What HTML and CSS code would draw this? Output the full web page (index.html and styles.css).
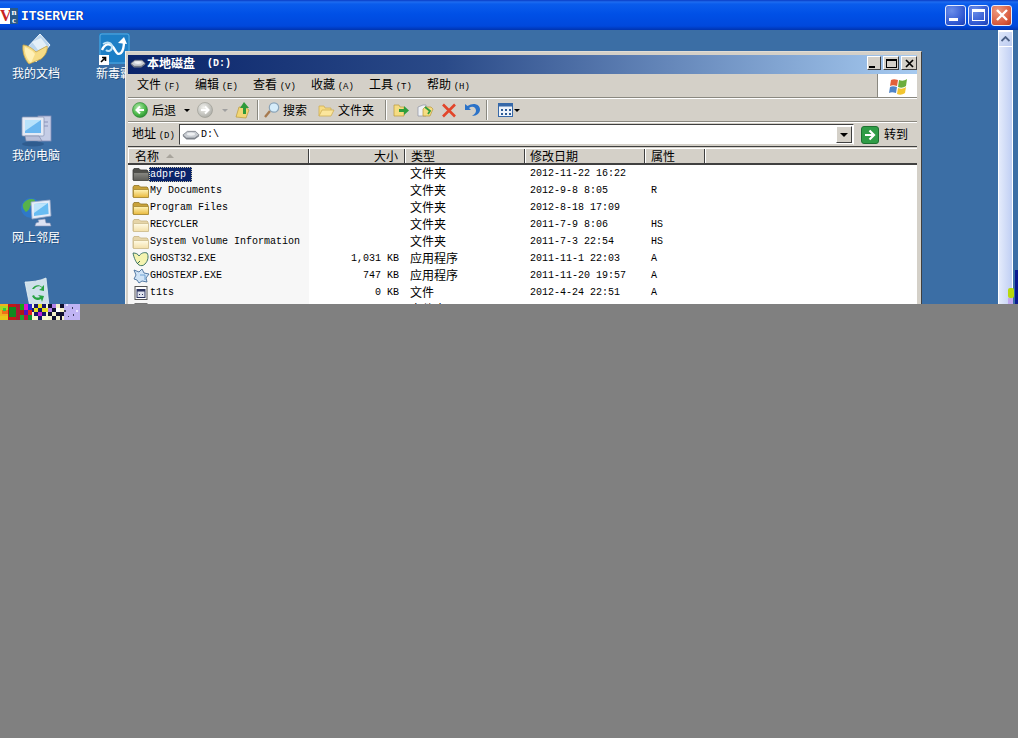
FILE: index.html
```html
<!DOCTYPE html>
<html lang="zh-CN">
<head>
<meta charset="utf-8">
<title>ITSERVER</title>
<link rel="stylesheet" href="styles.css">
</head>
<body>
<svg class="defs" width="0" height="0" aria-hidden="true">
  <defs>
    <linearGradient id="fg" x1="0" y1="0" x2="0" y2="1"><stop offset="0" stop-color="#fff4b8"/><stop offset="1" stop-color="#e8b83c"/></linearGradient>
    <linearGradient id="fgp" x1="0" y1="0" x2="0" y2="1"><stop offset="0" stop-color="#fffbe6"/><stop offset="1" stop-color="#f3dfa8"/></linearGradient>
    <linearGradient id="fgs" x1="0" y1="0" x2="0" y2="1"><stop offset="0" stop-color="#8a8a84"/><stop offset="1" stop-color="#5c5c58"/></linearGradient>
    <radialGradient id="gb" cx=".4" cy=".35" r=".75"><stop offset="0" stop-color="#b6ecb0"/><stop offset=".6" stop-color="#4cb84a"/><stop offset="1" stop-color="#1f7d2a"/></radialGradient>
    <radialGradient id="gy" cx=".4" cy=".35" r=".75"><stop offset="0" stop-color="#f2f2ee"/><stop offset="1" stop-color="#a5a59f"/></radialGradient>
    <symbol id="folder" viewBox="0 0 18 16"><path d="M1 14V4l1-1.500h5L8.500 4H15l1 1v9z" fill="#c9a23a" stroke="#8f7426" stroke-width=".8"/><path d="M1.500 14.500V6.500h15v8z" fill="url(#fg)" stroke="#a3852e" stroke-width=".8"/></symbol>
    <symbol id="folder-pale" viewBox="0 0 18 16"><path d="M1 14V4l1-1.500h5L8.500 4H15l1 1v9z" fill="#e6d5a8" stroke="#c6b382" stroke-width=".8"/><path d="M1.500 14.500V6.500h15v8z" fill="url(#fgp)" stroke="#cdbb8c" stroke-width=".8"/></symbol>
    <symbol id="folder-sel" viewBox="0 0 18 16"><path d="M1 14V4l1-1.500h5L8.500 4H15l1 1v9z" fill="#4e4e4a" stroke="#3a3a38" stroke-width=".8"/><path d="M1.500 14.500V6.500h15v8z" fill="url(#fgs)" stroke="#484844" stroke-width=".8"/></symbol>
    <symbol id="drive" viewBox="0 0 20 12"><path d="M1 6.500 6 2.500h9l4 4-5 3.500H5z" fill="#c8ccd2" stroke="#6d727a" stroke-width=".8"/><path d="M1 6.500 5 10h9l5-3.500v1.500L14 11.500H5L1 8z" fill="#7e838b"/><ellipse cx="10" cy="5.500" rx="4.500" ry="1.800" fill="#eef0f2"/></symbol>
  </defs>
</svg>

<div class="session">
  <header class="vnc-bar">
    <div class="vnc-logo"><span class="vnc-v">V</span><span class="vnc-nc">n<br>c</span></div>
    <span class="vnc-name">ITSERVER</span>
    <div class="vnc-btns">
      <span class="xp-btn xp-min"><i></i></span>
      <span class="xp-btn xp-max"><i></i></span>
      <span class="xp-btn xp-close"><svg width="14" height="14" viewBox="0 0 14 14"><path d="M2 2l10 10M12 2 2 12" stroke="#fff" stroke-width="2.400"/></svg></span>
    </div>
  </header>

  <main class="desktop">
    <div class="icon-column">
      <div class="desk-icon">
        <svg width="36" height="34" viewBox="0 0 36 34"><path d="M7 18 22 2l10 11-14 17z" fill="#bcd6ee" stroke="#eef5fb"/><path d="M14 10l9-4 6 8-9 4z" fill="#fff" opacity=".6"/><path d="M5 13c4 0 9 3 13 7l11-6c1 4-1 9-6 13l-12 5C7 28 4 20 5 13z" fill="#f6dc86" stroke="#c9a445" stroke-width=".8"/><path d="M7 15c3 1 7 3 10 7l-4 9c-3-3-7-9-6-16z" fill="#fff0b6"/></svg>
        <span class="desk-label">我的文档</span>
      </div>
      <div class="desk-icon">
        <svg width="36" height="34" viewBox="0 0 36 34"><rect x="20" y="2" width="13" height="25" fill="#c5cde6" stroke="#8690b8" stroke-width=".8"/><path d="M23 8h7M23 12h7" stroke="#8a93bb"/><rect x="4" y="3" width="22" height="19" rx="1" fill="#e4eaf5" stroke="#8c97b5" stroke-width=".8"/><rect x="7" y="6" width="16" height="13" fill="#6bb7f0"/><path d="M7 6h16L7 17z" fill="#b8e2fb"/><path d="M7 22h14l3 5H8z" fill="#b8bfd9" stroke="#7b84a5" stroke-width=".6"/><ellipse cx="15" cy="30" rx="11" ry="2.500" fill="#2f5c8f"/></svg>
        <span class="desk-label">我的电脑</span>
      </div>
      <div class="desk-icon">
        <svg width="36" height="34" viewBox="0 0 36 34"><circle cx="13" cy="12" r="10" fill="#2f78c8"/><path d="M5 8c3-5 9-6 12-4 0 3-3 5-5 6 0 3-2 5-4 6-2-2-4-5-3-8z" fill="#57b24a"/><path d="M13 6l19-2 1 16-19 3z" fill="#e4ecf8" stroke="#94a4c4" stroke-width=".8"/><path d="M16 8l14-1 .6 11L16 20z" fill="#68bcf2"/><path d="M16 8l14-1-14 10z" fill="#bde4fb"/><path d="M20 24l7-1 1 4h4l1 3H17l1-3 3-1z" fill="#dde2f2" stroke="#8f98b8" stroke-width=".6"/></svg>
        <span class="desk-label">网上邻居</span>
      </div>
      <div class="desk-icon">
        <svg class="bin" width="36" height="34" viewBox="0 0 36 34"><path d="M7 7c6 0 15-1 21-4l3 28c-5 3-13 3-19 1z" fill="#cfe0ea" stroke="#e8f2f6" stroke-width=".8"/><path d="M16 14c2-3 6-4 8-1l-3 2 5 1v-6l-2 2c-3-3-8-2-10 2z" fill="#27a341"/><path d="M14 21c2 4 6 5 9 3l1 3 2-6-6-1 2 2c-2 1-5 1-6-2z" fill="#27a341"/></svg>
      </div>
    </div>

    <div class="shortcut">
      <svg width="31" height="31" viewBox="0 0 31 31"><rect width="31" height="31" rx="2" fill="#1d7fc6"/><rect x="1" y="1" width="29" height="29" rx="2" fill="none" stroke="#69b5e6" stroke-width=".8"/><path d="M3 17c3-7 8-7 11-3s4 9 8 6c2-2 3-7 3-12" fill="none" stroke="#fff" stroke-width="2.400"/><path d="M19 10l6-6 3 7z" fill="#fff"/><path d="M4 11c5-3 9-1 9 3s-4 5-6 3" fill="none" stroke="#bfe3f7" stroke-width="2"/></svg>
      <span class="shortcut-arrow"><svg width="9" height="9" viewBox="0 0 9 9"><path d="M2 7l4-4M3 2.500h3.500V6" fill="none" stroke="#000" stroke-width="1.600"/></svg></span>
      <span class="shortcut-label">新毒霸</span>
    </div>

    <section class="window">
      <div class="win-title">
        <svg class="win-title-icon" width="16" height="10"><use href="#drive"/></svg>
        <span class="win-title-text">本地磁盘</span><span class="win-title-path">(D:)</span>
        <div class="win-btns">
          <span class="cl-btn cl-narrow"><i class="g-min"></i></span>
          <span class="cl-btn"><i class="g-max"></i></span>
          <span class="cl-btn"><svg width="9" height="9" viewBox="0 0 9 9"><path d="M1 1l7 7M8 1 1 8" stroke="#000" stroke-width="1.700"/></svg></span>
        </div>
      </div>

      <nav class="menu">
        <span class="menu-item">文件 <b>(F)</b></span>
        <span class="menu-item">编辑 <b>(E)</b></span>
        <span class="menu-item">查看 <b>(V)</b></span>
        <span class="menu-item">收藏 <b>(A)</b></span>
        <span class="menu-item">工具 <b>(T)</b></span>
        <span class="menu-item">帮助 <b>(H)</b></span>
        <div class="menu-logo">
          <svg width="20" height="20" viewBox="0 0 20 20"><path d="M2 4c2-1 4-1 7 0l-1 6c-3-1-5-1-7 0z" fill="#e2603a"/><path d="M10 4c3 1 5 1 8-1l-1 7c-3 2-5 2-8 1z" fill="#6cad3c"/><path d="M1 11c2-1 4-1 7 0l-1 6c-3-1-5-1-7 0z" fill="#4f84c8"/><path d="M9 12c3 1 5 1 8-1l-1 6c-3 2-5 2-8 1z" fill="#f2c530"/></svg>
        </div>
      </nav>

      <div class="toolbar">
        <span class="tb-btn tb-back">
          <svg width="16" height="16" viewBox="0 0 16 16"><circle cx="8" cy="8" r="7.500" fill="url(#gb)" stroke="#2c8433" stroke-width=".6"/><path d="M12 8H5M8 4.500 4.500 8 8 11.500" fill="none" stroke="#fff" stroke-width="2"/></svg>
          <span class="tb-text">后退</span><i class="caret"></i>
        </span>
        <span class="tb-btn tb-forward">
          <svg width="16" height="16" viewBox="0 0 16 16"><circle cx="8" cy="8" r="7.500" fill="url(#gy)" stroke="#97978f" stroke-width=".6"/><path d="M4 8h7M8 4.500 11.500 8 8 11.500" fill="none" stroke="#fff" stroke-width="2"/></svg>
          <i class="caret caret-off"></i>
        </span>
        <span class="tb-btn tb-up">
          <svg width="16" height="18" viewBox="0 0 16 18"><path d="M1 16 4 6h6l4 3-3 8z" fill="#f2d674" stroke="#b99a3b" stroke-width=".7"/><path d="M9 1l5 6h-3v6H8V7H5z" fill="#2d9a3a"/></svg>
        </span>
        <i class="tb-sep"></i>
        <span class="tb-btn tb-search">
          <svg width="18" height="18" viewBox="0 0 18 18"><path d="M7 10 2 16" stroke="#a6794f" stroke-width="2.400"/><circle cx="11" cy="6.500" r="4.700" fill="#d5ecfa" stroke="#8aa3b8" stroke-width="1.200"/></svg>
          <span class="tb-text">搜索</span>
        </span>
        <span class="tb-btn tb-folders">
          <svg width="17" height="15" viewBox="0 0 17 15"><path d="M1 13V3h5l1 2h6v2" fill="#f7dc85" stroke="#cfae54" stroke-width=".8"/><path d="M1 13l3-6h12l-3 6z" fill="#fbe69d" stroke="#cfae54" stroke-width=".8"/></svg>
          <span class="tb-text">文件夹</span>
        </span>
        <i class="tb-sep tb-sep-tight"></i>
        <span class="tb-btn tb-small">
          <svg width="17" height="16" viewBox="0 0 17 16"><path d="M1 14V3h5l1 2h4v9z" fill="#f5dc82" stroke="#b99a3b" stroke-width=".7"/><path d="M6 7h5V4l5 4.500L11 13v-3H6z" fill="#2e9e3c"/></svg>
        </span>
        <span class="tb-btn tb-small">
          <svg width="17" height="16" viewBox="0 0 17 16"><path d="M1 14V5l5-2h3v11z" fill="#f0f2f5" stroke="#8e94a3" stroke-width=".7"/><path d="M6 14V7l2-2h6l2 2-3 7z" fill="#f5dc82" stroke="#b99a3b" stroke-width=".7"/><path d="M8 5l5 4-2 3" fill="none" stroke="#2e9e3c" stroke-width="1.800"/></svg>
        </span>
        <span class="tb-btn tb-small">
          <svg width="16" height="15" viewBox="0 0 16 15"><path d="M2 1.500l12 12M14 1.500l-12 12" stroke="#e2452a" stroke-width="2.600"/></svg>
        </span>
        <span class="tb-btn tb-small">
          <svg width="17" height="15" viewBox="0 0 17 15"><path d="M1 1v6h6L5 5c3-2.500 7-1 7 2.500 0 2-1 3.500-4 5.500 5 0 8-3 8-6.500C16 1 9-1 3.500 3z" fill="#2b72c8"/></svg>
        </span>
        <i class="tb-sep"></i>
        <span class="tb-btn tb-views">
          <svg width="15" height="14" viewBox="0 0 15 14"><rect x=".5" y=".5" width="14" height="13" fill="#eef3fa" stroke="#3768a8"/><rect x=".5" y=".5" width="14" height="3" fill="#3768a8"/><path d="M3 6h2v2H3zM7 6h2v2H7zM11 6h2v2h-2zM3 10h2v2H3zM7 10h2v2H7zM11 10h2v2h-2z" fill="#2f5c96"/></svg>
          <i class="caret"></i>
        </span>
      </div>

      <div class="address">
        <span class="addr-label">地址 <b>(D)</b></span>
        <div class="addr-input">
          <svg width="18" height="11"><use href="#drive"/></svg>
          <span class="mono">D:\</span>
          <span class="addr-drop"><i></i></span>
        </div>
        <span class="go">
          <svg width="18" height="18" viewBox="0 0 18 18"><rect x=".5" y=".5" width="17" height="17" rx="2.500" fill="#2f9c46" stroke="#1d7130"/><path d="M4 9h8M8.500 4.500 13 9l-4.500 4.500" fill="none" stroke="#fff" stroke-width="2.200"/></svg>
          <span class="tb-text go-text">转到</span>
        </span>
      </div>

      <div class="list-head">
        <span class="hd hd-name">名称<i class="sort"></i></span>
        <span class="hd hd-right">大小</span>
        <span class="hd hd-type">类型</span>
        <span class="hd">修改日期</span>
        <span class="hd hd-attr">属性</span>
        <span class="hd hd-rest"></span>
      </div>

      <div class="list">
        <div class="row">
          <span class="c-name"><svg class="f-icon" width="18" height="16"><use href="#folder-sel"/></svg><span class="name name-sel">adprep</span></span>
          <span class="c-size"></span><span class="c-type">文件夹</span><span class="c-date">2012-11-22 16:22</span><span class="c-attr"></span>
        </div>
        <div class="row">
          <span class="c-name"><svg class="f-icon" width="18" height="16"><use href="#folder"/></svg><span class="name">My Documents</span></span>
          <span class="c-size"></span><span class="c-type">文件夹</span><span class="c-date">2012-9-8 8:05</span><span class="c-attr">R</span>
        </div>
        <div class="row">
          <span class="c-name"><svg class="f-icon" width="18" height="16"><use href="#folder"/></svg><span class="name">Program Files</span></span>
          <span class="c-size"></span><span class="c-type">文件夹</span><span class="c-date">2012-8-18 17:09</span><span class="c-attr"></span>
        </div>
        <div class="row">
          <span class="c-name"><svg class="f-icon" width="18" height="16"><use href="#folder-pale"/></svg><span class="name">RECYCLER</span></span>
          <span class="c-size"></span><span class="c-type">文件夹</span><span class="c-date">2011-7-9 8:06</span><span class="c-attr">HS</span>
        </div>
        <div class="row">
          <span class="c-name"><svg class="f-icon" width="18" height="16"><use href="#folder-pale"/></svg><span class="name">System Volume Information</span></span>
          <span class="c-size"></span><span class="c-type">文件夹</span><span class="c-date">2011-7-3 22:54</span><span class="c-attr">HS</span>
        </div>
        <div class="row">
          <span class="c-name"><svg class="f-icon" width="18" height="16" viewBox="0 0 18 16"><path d="M1 2c3 0 5 1 6 3 2-3 5-4 8-3 2 3 1 8-2 11-2 2-4 2-6 1C4 12 2 7 1 2z" fill="#f4f3b0" stroke="#2f6a5c" stroke-width=".9"/><path d="M5 13l3-3" stroke="#2f6a5c"/></svg><span class="name">GHOST32.EXE</span></span>
          <span class="c-size">1,031 KB</span><span class="c-type">应用程序</span><span class="c-date">2011-11-1 22:03</span><span class="c-attr">A</span>
        </div>
        <div class="row">
          <span class="c-name"><svg class="f-icon" width="18" height="16" viewBox="0 0 18 16"><path d="M2 2l5 2 3-3 2 4 5 1-3 4 1 4-5-1-3 2-2-3-3-1 2-4z" fill="#cfe3f6" stroke="#476f9c" stroke-width=".9"/><path d="M8 7h5v5" fill="none" stroke="#6fa2d2"/></svg><span class="name">GHOSTEXP.EXE</span></span>
          <span class="c-size">747 KB</span><span class="c-type">应用程序</span><span class="c-date">2011-11-20 19:57</span><span class="c-attr">A</span>
        </div>
        <div class="row">
          <span class="c-name"><svg class="f-icon" width="18" height="16" viewBox="0 0 18 16"><rect x="3" y="1.500" width="12" height="13" fill="#fff" stroke="#555"/><rect x="5" y="4.500" width="8" height="8" fill="#dfe3ee" stroke="#2c3560"/><rect x="5" y="4.500" width="8" height="2" fill="#2c3560"/><path d="M7 9h1v1H7zM10 9h1v1h-1z" fill="#2c3560"/></svg><span class="name">t1ts</span></span>
          <span class="c-size">0 KB</span><span class="c-type">文件</span><span class="c-date">2012-4-24 22:51</span><span class="c-attr">A</span>
        </div>
        <div class="row">
          <span class="c-name"><svg class="f-icon" width="18" height="16" viewBox="0 0 18 16"><rect x="3" y="1.500" width="12" height="13" fill="#fff" stroke="#777"/></svg><span class="name"></span></span>
          <span class="c-size"></span><span class="c-type">文件夹</span><span class="c-date"></span><span class="c-attr"></span>
        </div>
      </div>
    </section>

    <aside class="scrollbar">
      <span class="sb-up"><svg width="9" height="6" viewBox="0 0 9 6"><path d="M.5 5 4.500 1l4 4" fill="none" stroke="#4d6185" stroke-width="1.800"/></svg></span>
      <span class="sb-track"></span>
    </aside>
    <i class="glitch-dot"></i>
    <i class="glitch-lilac"></i>
    <i class="glitch-navy"></i>
  </main>
</div>

<svg class="noise" width="80" height="16" viewBox="0 0 80 16" shape-rendering="crispEdges" aria-hidden="true">
  <rect width="80" height="16" fill="#fff"/>
  <rect width="8" height="16" fill="#f0b020"/><rect y="2" width="8" height="4" fill="#a8d820"/><rect x="2" y="6" width="6" height="4" fill="#f07018"/><rect x="3" y="4" width="3" height="3" fill="#38c838"/><rect y="12" width="8" height="4" fill="#e8c818"/>
  <rect x="8" width="8" height="16" fill="#c01818"/><rect x="9" y="3" width="7" height="10" fill="#108820"/>
  <rect x="16" width="4" height="16" fill="#a81830"/><rect x="20" width="4" height="6" fill="#18a018"/><rect x="20" y="6" width="4" height="5" fill="#b01818"/><rect x="20" y="11" width="4" height="5" fill="#20a030"/>
  <rect x="24" width="4" height="6" fill="#e010d0"/><rect x="24" y="6" width="4" height="5" fill="#5010c0"/><rect x="24" y="11" width="4" height="5" fill="#c01040"/><rect x="28" width="4" height="6" fill="#2828d0"/><rect x="28" y="6" width="4" height="5" fill="#e02020"/><rect x="28" y="11" width="4" height="5" fill="#109030"/>
  <rect x="32" width="16" height="16" fill="#f8f8d0"/><path d="M34 0h4v4h-4zM42 0h4v4h-4zM32 4h2v4h-2zM38 4h4v4h-4zM34 8h4v4h-4zM42 8h4v4h-4zM38 12h4v4h-4z" fill="#181868"/><path d="M38 0h4v4h-4zM34 4h4v4h-4zM42 4h6v4h-6z" fill="#e8e020"/><path d="M38 8h4v4h-4z" fill="#c020d0"/>
  <rect x="48" width="16" height="16" fill="#f4f0c8"/><path d="M48 0h4v4h-4zM52 4h4v4h-4zM60 0h4v4h-4zM56 8h4v4h-4zM48 8h4v4h-4zM60 8h4v4h-4zM52 12h4v4h-4zM60 12h2v4h-2z" fill="#101030"/><path d="M52 0h4v4h-4zM48 4h4v4h-4z" fill="#b080e8"/><path d="M56 4h4v4h-4z" fill="#ffffff"/>
  <rect x="64" width="16" height="16" fill="#c0b4f4"/><path d="M72 3h1v2h-1zM73 10h1v2h-1zM64 6h2v2h-2zM68 12h1v1h-1z" fill="#404060"/><path d="M66 0h2v2h-2zM76 6h2v2h-2z" fill="#e8e4ff"/>
</svg>
</body>
</html>
```

FILE: styles.css
```css
* { box-sizing: border-box; }
html, body { margin: 0; padding: 0; }
body {
  width: 1018px;
  height: 738px;
  overflow: hidden;
  background: #808080;
  font-family: "Noto Sans CJK SC", "Liberation Sans", sans-serif;
  font-size: 12px;
  color: #000;
}
i { display: block; font-style: normal; }
b { font-weight: normal; font-family: "Liberation Mono", monospace; font-size: 9px; }
.defs { position: absolute; }
.mono { font-family: "Liberation Mono", monospace; font-size: 10px; }

.session { width: 1018px; height: 304px; overflow: hidden; display: flex; flex-direction: column; }
.noise { display: block; }

/* Outer viewer title bar */
.vnc-bar {
  flex: none;
  height: 30px;
  display: flex;
  align-items: center;
  padding-top: 2px;
  background: linear-gradient(#0a3cc4 0, #1e6cf0 2px, #0a5cec 4px, #0050e6 14px, #0048dc 26px, #0034b0 30px);
}
.vnc-logo {
  width: 18px; height: 16px;
  display: flex;
  background: #fff;
  font-family: "Liberation Serif", serif;
  font-weight: bold;
  line-height: 8px;
}
.vnc-v { width: 10px; height: 16px; background: #fff; color: #c8231f; font-size: 16px; line-height: 16px; }
.vnc-nc { width: 8px; height: 16px; background: #2a5a88; color: #fff; font-size: 9px; text-align: center; }
.vnc-name {
  margin-left: 3px;
  font-family: "Liberation Mono", monospace;
  font-weight: bold;
  font-size: 13px;
  color: #fff;
  text-shadow: 1px 0 0 #0a2c90;
}
.vnc-btns { margin-left: auto; margin-right: 6px; display: flex; gap: 2px; margin-top: -2px; }
.xp-btn {
  width: 21px; height: 21px;
  display: flex; align-items: center; justify-content: center;
  border: 1px solid #e4ecff;
  border-radius: 3px;
  background: radial-gradient(circle at 30% 25%, #6b8eea, #2d55cf 70%, #1e3fb0);
}
.xp-min i { width: 9px; height: 3px; background: #fff; margin: 9px 5px 0 0; }
.xp-max i { width: 13px; height: 12px; border: 1px solid #fff; border-top-width: 3px; }
.xp-close { background: radial-gradient(circle at 30% 25%, #ed9a80, #d8583a 70%, #b23a20); }

/* Desktop */
.desktop {
  position: relative;
  flex: 1;
  background: #3b6ea5;
  overflow: hidden;
}
.icon-column {
  display: flex;
  flex-direction: column;
  gap: 18px;
  width: 72px;
  padding-top: 2px;
}
.desk-icon { height: 64px; display: flex; flex-direction: column; align-items: center; }
.desk-label { color: #fff; line-height: 16px; margin-top: -1px; text-shadow: 1px 1px 0 #24507f; }
.bin { margin-top: -3px; }
.shortcut { position: absolute; left: 99px; top: 3px; width: 31px; }
.shortcut svg { display: block; }
.shortcut-arrow {
  position: absolute; left: 0; top: 22px;
  width: 10px; height: 10px;
  background: #fff;
}
.shortcut-label {
  position: absolute; left: -3px; top: 32px;
  white-space: nowrap;
  color: #fff;
  line-height: 16px;
  text-shadow: 1px 1px 0 #24507f;
}

/* Explorer window */
.window {
  position: absolute;
  left: 125px; top: 21px;
  width: 797px;
  height: 400px;
  padding: 3px 4px 3px 2px;
  background: #d4d0c8;
  border-top: 1px solid #dfdcd6;
  border-left: 1px solid #f4f3f0;
  border-right: 1px solid #404040;
  border-bottom: 1px solid #404040;
}
.win-title {
  height: 19px;
  display: flex;
  align-items: center;
  padding: 0 0 3px 2px;
  background: linear-gradient(90deg, #0a246a 0, #2a4a88 40%, #a6caf0 100%);
  color: #fff;
  font-weight: bold;
}
.win-title-icon { flex: none; }
.win-title-text { margin-left: 1px; line-height: 16px; }
.win-title-path { margin-left: 12px; font-family: "Liberation Mono", monospace; font-size: 10px; }
.win-btns { margin-left: auto; display: flex; align-items: center; }
.cl-btn {
  width: 16px; height: 14px;
  margin-left: 2px;
  display: flex; align-items: center; justify-content: center;
  background: #d4d0c8;
  border-top: 1px solid #fff; border-left: 1px solid #fff;
  border-right: 1px solid #404040; border-bottom: 1px solid #404040;
}
.cl-narrow { width: 14px; }
.g-min { width: 6px; height: 2px; background: #000; margin: 7px 4px 0 0; }
.g-max { width: 11px; height: 9px; border: 1px solid #000; border-top-width: 2px; }

.menu {
  height: 24px;
  display: flex;
  align-items: center;
  padding-left: 9px;
  gap: 11px;
  border-bottom: 1px solid #8a8880;
}
.menu-item { white-space: nowrap; line-height: 16px; width: 47px; }
.menu-logo {
  margin-left: auto;
  width: 40px; height: 23px;
  display: flex; align-items: center; justify-content: center;
  padding-left: 2px;
  background: #fff;
  border-left: 1px solid #8a8880;
}
.toolbar {
  height: 24px;
  display: flex;
  align-items: center;
  padding-left: 4px;
  border-top: 1px solid #fff;
  border-bottom: 1px solid #8a8880;
}
.tb-btn { display: flex; align-items: center; gap: 4px; white-space: nowrap; }
.tb-back { width: 65px; }
.tb-back .tb-text { width: 28px; }
.tb-forward { width: 38px; gap: 9px; }
.tb-up { width: 20px; }
.tb-search { width: 52px; gap: 2px; }
.tb-folders { width: 65px; gap: 3px; margin-left: 3px; }
.tb-small { width: 23.500px; justify-content: center; }
.tb-views { margin-left: 6px; gap: 1px; }
.tb-text { line-height: 16px; }
.caret { width: 0; height: 0; border: 3px solid transparent; border-top: 3px solid #000; border-bottom: 0; }
.caret-off { border-top-color: #a0a0a0; }
.tb-sep { width: 2px; height: 20px; margin: 0 4px 0 2px; border-left: 1px solid #8a8880; border-right: 1px solid #fff; }
.tb-sep-tight { margin-right: 3px; }

.address {
  height: 25px;
  display: flex;
  align-items: center;
  padding-left: 4px;
  border-top: 1px solid #fff;
  border-bottom: 1px solid #404040;
}
.addr-label { width: 47px; flex: none; white-space: nowrap; line-height: 16px; }
.addr-input {
  flex: none;
  width: 675px;
  height: 21px;
  display: flex;
  align-items: center;
  gap: 1px;
  padding-left: 2px;
  background: #fff;
  border-top: 1px solid #404040;
  border-left: 1px solid #404040;
  border-bottom: 1px solid #d4d0c8;
  border-right: 1px solid #fff;
}
.addr-drop {
  margin-left: auto;
  width: 16px; height: 17px;
  display: flex; align-items: center; justify-content: center;
  background: #d4d0c8;
  border-top: 1px solid #fff; border-left: 1px solid #fff;
  border-right: 1px solid #404040; border-bottom: 1px solid #404040;
  margin-right: 1px;
}
.addr-drop i { width: 0; height: 0; border: 4px solid transparent; border-top: 4px solid #000; border-bottom: 0; }
.go { display: flex; align-items: center; gap: 5px; margin-left: 7px; white-space: nowrap; }
.go-text { padding-bottom: 2px; }

.list-head {
  height: 17px;
  margin-top: 1px;
  display: grid;
  grid-template-columns: 181px 96px 120px 120px 60px 1fr;
  border-top: 1px solid #fff;
  border-bottom: 2px solid #404040;
  background: #d4d0c8;
}
.hd {
  display: flex;
  align-items: center;
  padding-left: 4px;
  line-height: 14px;
  border-left: 1px solid #fff;
  border-right: 1px solid #404040;
  white-space: nowrap;
}
.hd-name { padding-left: 6px; }
.hd-type { padding-left: 5px; }
.hd-attr { padding-left: 5px; }
.hd-right { justify-content: flex-end; padding-right: 6px; }
.hd-rest { border-right: 0; }
.sort { margin-left: 7px; width: 0; height: 0; border: 4px solid transparent; border-bottom: 4px solid #a8a49c; border-top: 0; }

.list {
  background: linear-gradient(90deg, #f7f7f7 0, #f7f7f7 181px, #fff 181px);
  height: 300px;
}
.row {
  height: 17px;
  display: grid;
  grid-template-columns: 181px 96px 120px 120px 60px;
  align-items: center;
  line-height: 16px;
  white-space: nowrap;
}
.c-name { display: flex; align-items: center; padding-left: 4px; }
.f-icon { flex: none; }
.name, .c-size, .c-date, .c-attr { font-family: "Liberation Mono", monospace; font-size: 10px; }
.name { padding: 0 1px; margin-left: -1px; }
.name-sel {
  background: #0a246a;
  color: #fff;
  outline: 1px dotted #c9c3a6;
  outline-offset: -1px;
  padding: 0 6px 0 1px;
  line-height: 15px;
}
.c-size { text-align: right; padding-right: 6px; }
.c-type { padding: 0 0 2px 5px; }
.c-date { padding-left: 5px; }
.c-attr { padding-left: 6px; }

/* Outer scrollbar */
.scrollbar {
  position: absolute;
  right: 5px; top: 0;
  width: 15px; bottom: 0;
  display: flex;
  flex-direction: column;
  background: #fff;
  padding-top: 1px;
}
.sb-up {
  height: 16px;
  display: flex; align-items: center; justify-content: center;
  background: linear-gradient(135deg, #dfe8fa, #bccbf0);
  border: 1px solid #fff;
}
.sb-track { flex: 1; background: linear-gradient(90deg, #e4ebfb, #c0cff4); border-left: 1px solid #fff; border-right: 1px solid #fff; }
.glitch-dot {
  position: absolute;
  right: 4px; top: 258px;
  width: 6px; height: 10px;
  border-radius: 2px;
  background: #b8d80c;
}
.glitch-lilac {
  position: absolute;
  right: 5px; top: 268px;
  width: 5px; height: 6px;
  background: #c0a8f0;
}
.glitch-navy {
  position: absolute;
  right: 0; top: 240px;
  width: 3px; height: 34px;
  background: #0a1a90;
}
```
